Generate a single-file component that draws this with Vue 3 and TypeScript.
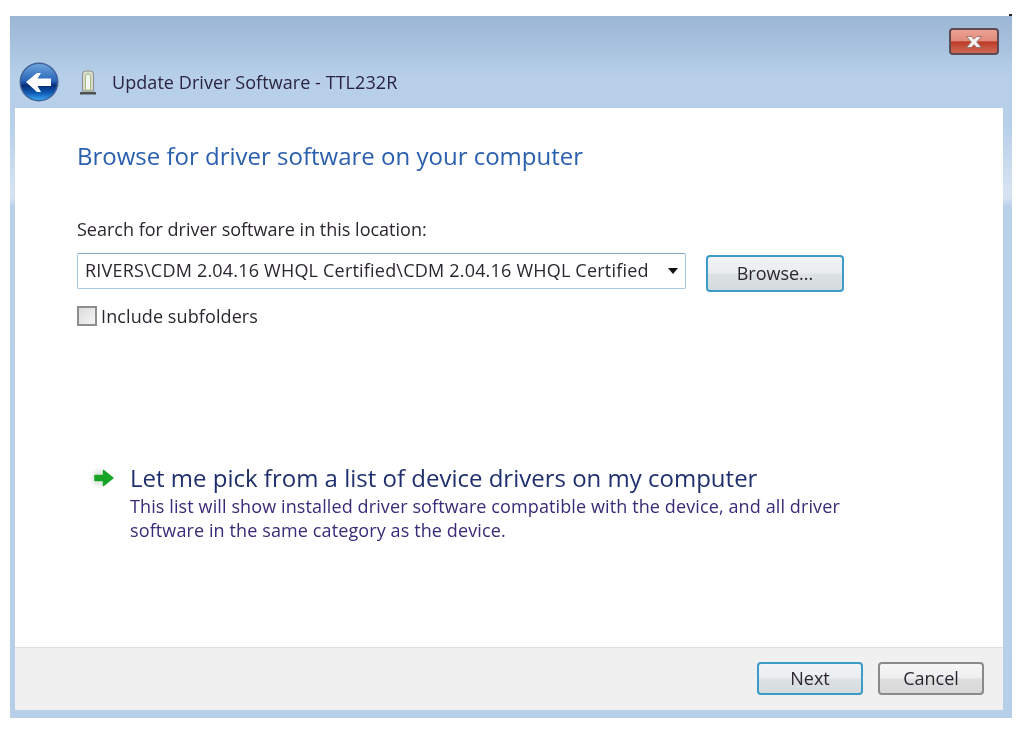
<script setup lang="ts">
const title = 'Update Driver Software - TTL232R'
const path = 'RIVERS\\CDM 2.04.16 WHQL Certified\\CDM 2.04.16 WHQL Certified'
</script>

<template>
  <div class="screen">
    <span class="speck"></span>
    <div class="window">
      <div class="titlebar">
        <div class="caption-row">
          <button class="close" aria-label="Close">
            <svg width="20" height="14" viewBox="0 0 20 14">
              <path d="M2.500 1.500h4.700L10 4.300l2.800-2.800h4.700L12.700 7l4.800 5.500h-4.700L10 9.700l-2.800 2.800H2.500L7.300 7z" fill="#f6f4f3" stroke="#8a6460" stroke-width="0.8" />
            </svg>
          </button>
        </div>
        <div class="nav-row">
          <svg class="back" width="42" height="40" viewBox="0 0 42 40">
            <defs>
              <linearGradient id="orb" x1="0" y1="0" x2="0" y2="1">
                <stop offset="0" stop-color="#6ea3dc" />
                <stop offset="0.46" stop-color="#2a67bb" />
                <stop offset="0.6" stop-color="#052f78" />
                <stop offset="0.8" stop-color="#0f5ab4" />
                <stop offset="1" stop-color="#37a4ee" />
              </linearGradient>
            </defs>
            <circle cx="21" cy="20" r="19.500" fill="#41639a" />
            <circle cx="21" cy="20" r="18" fill="url(#orb)" />
            <path d="M8 20 19 11h4l-3.500 5.500H33v7.500H19.500l3.500 6h-4z" fill="#fff" />
          </svg>
          <svg class="device" width="18" height="26" viewBox="0 0 18 26">
            <path d="M3.500 22V5q0-3 3-3h5q3 0 3 3v17z" fill="#d9dacb" stroke="#8b8f88" />
            <path d="M6.500 21V7q0-2 2.500-2t2.500 2v14z" fill="#f3f5ee" stroke="#a5c07e" />
            <path d="M1 23h16v2.500H1z" fill="#4d5350" />
          </svg>
          <span class="title">{{ title }}</span>
        </div>
      </div>

      <div class="client">
        <div class="body">
          <h1 class="heading">Browse for driver software on your computer</h1>
          <label class="field-label">Search for driver software in this location:</label>
          <div class="path-row">
            <div class="combo">
              <span class="combo-text">{{ path }}</span>
              <span class="caret"></span>
            </div>
            <button class="btn btn-focus browse">Browse...</button>
          </div>
          <label class="check-row">
            <span class="box"></span>
            <span>Include subfolders</span>
          </label>

          <div class="link-row">
            <svg class="arrow" width="28" height="24" viewBox="0 0 28 24">
              <defs>
                <radialGradient id="halo">
                  <stop offset="0.5" stop-color="#e6e9e6" />
                  <stop offset="1" stop-color="#ffffff" />
                </radialGradient>
              </defs>
              <circle cx="13" cy="12" r="11" fill="url(#halo)" />
              <path d="M8 9.500h8.500V4.500L26 12l-9.500 7.500v-5H8z" fill="#16a526" stroke="#16a526" stroke-width="1.500" stroke-linejoin="round" />
            </svg>
            <div class="link-text">
              <div class="link-title">Let me pick from a list of device drivers on my computer</div>
              <div class="link-desc">This list will show installed driver software compatible with the device, and all driver<br />software in the same category as the device.</div>
            </div>
          </div>
        </div>

        <div class="footer">
          <button class="btn btn-focus">Next</button>
          <button class="btn">Cancel</button>
        </div>
      </div>
    </div>
  </div>
</template>

<style>
html, body { margin: 0; background: #fff; }
</style>

<style scoped>
.screen {
  position: relative;
  width: 1024px; height: 752px;
  padding: 16px 0 0 10px;
  box-sizing: border-box;
  overflow: hidden;
  font-family: "Open Sans", "Noto Sans", sans-serif;
  color: #2c2630;
}
.speck { position: absolute; left: 1009px; top: 14px; width: 3px; height: 2px; background: #222; }
.window {
  width: 1002px; height: 702px;
  display: flex; flex-direction: column;
  background: linear-gradient(#b7cfe9 0, #b7cfe9 110px, #d4e2f2 172px, #d4e2f2 182px, #b9d0e9 190px, #b7cfe9 100%);
  box-sizing: border-box;
  padding: 0 9px 8px 5px;
  filter: blur(0.4px);
}
.titlebar {
  height: 92px;
  margin: 0 -9px 0 -5px;
  padding: 0 13px 0 9px;
  background: linear-gradient(#9cb7d5 0%, #a6c0dd 30%, #b7cfe9 65%, #b7cfe9 100%);
  display: flex; flex-direction: column;
}
.caption-row { display: flex; justify-content: flex-end; padding-top: 12px; height: 39px; box-sizing: border-box; }
.close {
  width: 50px; height: 27px; padding: 0;
  border: 2px solid #5c4a55; border-radius: 4px;
  background: linear-gradient(#eba193 0%, #e28c7b 46%, #bd3c28 52%, #cf6a58 100%);
  display: flex; align-items: center; justify-content: center;
}
.nav-row { display: flex; align-items: center; height: 40px; margin-top: 7px; margin-left: -1px; }
.back { flex: none; }
.device { flex: none; margin-left: 19px; }
.title { margin-left: 15px; font-size: 18px; letter-spacing: 0.06px; color: #2a2440; white-space: nowrap; }
.client { flex: 1; display: flex; flex-direction: column; background: #fff; min-height: 0; }
.body { flex: 1; padding: 32px 0 0 62px; }
.heading { margin: 0; font-size: 24px; line-height: 32px; font-weight: 400; color: #2a5fae; white-space: nowrap; }
.field-label { display: block; margin-top: 45px; font-size: 18px; line-height: 24px; }
.path-row { display: flex; align-items: flex-start; margin-top: 12px; }
.combo {
  width: 609px; height: 36px; box-sizing: border-box;
  border: 1px solid #a9c8e2; border-top-color: #7fa6c9; border-radius: 2px;
  display: flex; align-items: center; justify-content: space-between;
  padding: 0 7px 0 7px;
}
.combo-text { font-size: 18px; letter-spacing: 0.2px; white-space: nowrap; padding-bottom: 2px; }
.caret { width: 0; height: 0; border: 5.500px solid transparent; border-top: 6px solid #111; border-bottom: 0; }
.btn {
  width: 106px; height: 33px; padding: 0;
  border: 2px solid #8a8a8a; border-radius: 4px;
  background: linear-gradient(#f6f6f6 0%, #eeeeee 48%, #dfdfdf 52%, #d8d8d8 100%);
  font: inherit; font-size: 18px; color: #2c2630;
}
.btn-focus { border-color: #3d9bc8; background: linear-gradient(#f0f4f7 0%, #e9edf0 48%, #dde2e5 52%, #d5dadd 100%); }
.browse { width: 138px; height: 37px; margin: 2px 0 0 20px; padding-bottom: 2px; }
.check-row { display: flex; align-items: center; gap: 4px; margin-top: 12px; font-size: 18px; line-height: 24px; letter-spacing: 0.1px; }
.box {
  width: 20px; height: 20px; box-sizing: border-box;
  border: 2px solid #8e8e8e;
  background: linear-gradient(135deg, #dcdcdc, #f4f4f4);
}
.link-row { display: flex; margin: 135px 0 0 10px; }
.arrow { flex: none; margin-top: 3px; }
.link-text { margin-left: 15px; }
.link-title { font-size: 24px; line-height: 30px; color: #20306e; white-space: nowrap; }
.link-desc { margin-top: 2px; font-size: 18px; line-height: 23.5px; letter-spacing: 0.11px; color: #3a2a78; white-space: nowrap; }
.footer {
  height: 63px; box-sizing: border-box;
  background: #f0f0f0; border-top: 1px solid #dfdfdf;
  display: flex; align-items: center; justify-content: flex-end; gap: 15px;
  padding: 0 19px 2px 0;
}
</style>
